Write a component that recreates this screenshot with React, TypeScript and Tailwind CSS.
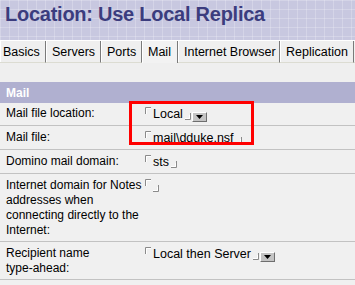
import React from "react";

const OpenMark = () => (
  <svg width="6" height="7" viewBox="0 0 6 7" className="shrink-0 mt-[1px]">
    <path d="M0.5 7V0.5H6" fill="none" stroke="#8a8a8a" />
    <path d="M1.5 7V1.5H6" fill="none" stroke="#ffffff" />
  </svg>
);

const CloseMark = () => (
  <svg width="6" height="7" viewBox="0 0 6 7" className="shrink-0 mt-[7px] ml-[2px]">
    <path d="M0 6.5H5.5V0" fill="none" stroke="#8a8a8a" />
    <path d="M0 5.5H4.5V2" fill="none" stroke="#ffffff" />
  </svg>
);

const DropButton = () => (
  <span className="ml-[1px] mt-[6px] flex h-[10px] w-[15px] shrink-0 items-center justify-center border border-t-white border-l-white border-r-[#6e6e6e] border-b-[#6e6e6e] bg-[#c4c4c4]">
    <svg width="7" height="4" viewBox="0 0 7 4">
      <path d="M0 0H7L3.5 4Z" fill="#000" />
    </svg>
  </span>
);

type Row = {
  label: React.ReactNode;
  value?: string;
  drop?: boolean;
  top?: boolean;
};

const rows: Row[] = [
  { label: "Mail file location:", value: "Local", drop: true, top: true },
  { label: "Mail file:", value: "mail\\dduke.nsf" },
  { label: "Domino mail domain:", value: "sts" },
  {
    label: (
      <>
        Internet domain for Notes
        <br />
        addresses when
        <br />
        connecting directly to the
        <br />
        Internet:
      </>
    ),
    value: "",
  },
  {
    label: (
      <>
        Recipient name
        <br />
        type-ahead:
      </>
    ),
    value: "Local then Server",
    drop: true,
  },
  { label: "", value: "" },
];

const tabs = [
  { name: "Basics", w: "w-[46px] pl-[3px]" },
  { name: "Servers", w: "w-[55px] pl-[6px]" },
  { name: "Ports", w: "w-[41px] pl-[6px]" },
  { name: "Mail", w: "w-[36px] pl-[6px]" },
  { name: "Internet Browser", w: "w-[102px] pl-[6px]" },
  { name: "Replication", w: "w-[74px] pl-[6px]" },
];

export default function App() {
  return (
    <div className="relative h-[285px] w-[355px] overflow-hidden bg-[#f0f0f0] font-['Liberation_Sans',Arial,sans-serif] text-[12px] leading-[15px] text-black">
      <div className="h-[40px] bg-[#c8c8e0] bg-[linear-gradient(90deg,rgba(255,255,255,0.22)_1px,transparent_1px),linear-gradient(rgba(255,255,255,0.22)_1px,transparent_1px)] bg-[size:9px_9px] pl-[5px] pt-[4px]">
        <h1 className="text-[20px] font-bold leading-[20px] tracking-[-0.25px] text-[#3b3c7e]">Location: Use Local Replica</h1>
      </div>

      <div className="flex h-[23px] border-t border-white text-[12.5px]">
        {tabs.map((t) => (
          <div
            key={t.name}
            className={`${t.w} shrink-0 whitespace-nowrap border-r border-r-[#7a7a7a] pt-[4px] shadow-[inset_1px_0_0_#ffffff] ${
              t.name === "Mail" ? "bg-[#f2f2f2]" : "border-b border-b-[#dcdcd2] bg-[#efefef]"
            }`}
          >
            {t.name}
          </div>
        ))}
        <div className="flex-1 border-b border-b-[#dcdcd2]" />
      </div>

      <div className="h-[19px] bg-[#efefef]" />

      <div className="h-[21px] bg-[#b0b0d0] pl-[6px] pt-[4px] font-bold text-white">Mail</div>

      <div>
        {rows.map((r, i) => (
          <div
            key={i}
            className={`grid grid-cols-[145px_1fr] pb-[3px] ${r.top ? "pt-[3px]" : "border-t border-[#c2c2c2] pt-[4px]"}`}
          >
            <div className="pl-[6px]">{r.label}</div>
            <div className="flex items-start">
              <OpenMark />
              {r.label !== "" && (
                <>
                  {r.value && <span className="ml-[2px] mt-[1px] text-[12.5px]">{r.value}</span>}
                  <CloseMark />
                  {r.drop && <DropButton />}
                </>
              )}
            </div>
          </div>
        ))}
      </div>

      <div className="absolute left-[129px] top-[101px] h-[44px] w-[125px] border-[3px] border-[#ff0000]" />
    </div>
  );
}
